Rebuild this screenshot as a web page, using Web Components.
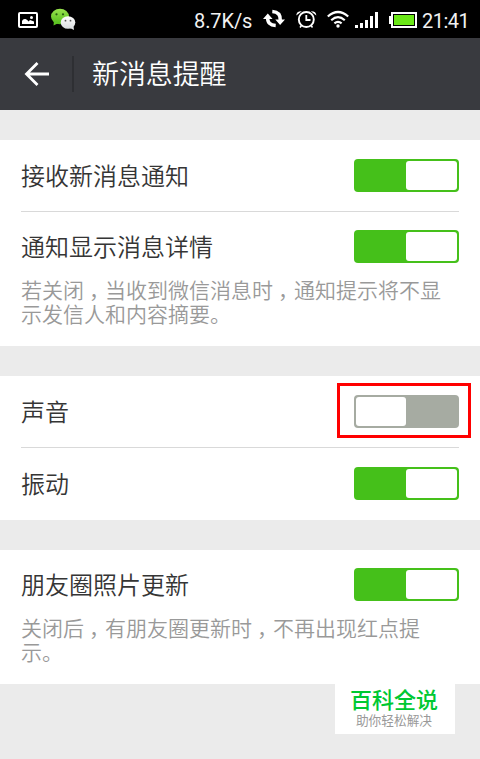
<!DOCTYPE html>
<html lang="zh-CN">
<head>
<meta charset="utf-8">
<title>新消息提醒</title>
<style>
  body {
    margin: 0;
    font-family: "Noto Sans CJK SC", sans-serif;
  }
</style>
</head>
<body>
<settings-page></settings-page>

<script>
const statusStyles = `
  <style>
    :host {
      display: flex;
      align-items: center;
      justify-content: space-between;
      height: 38px;
      box-sizing: border-box;
      background: #000;
      color: #f2f2f2;
      font: 20px/38px Roboto, sans-serif;
    }
    svg { display: block; flex: none; }
    .text { white-space: nowrap; padding-top: 2px; height: 36px; }
    .left, .right { display: flex; align-items: center; height: 38px; }
    .left { padding-left: 18px; gap: 12px; }
    .right { padding-right: 10px; }
    .speed { width: 58px; margin-right: 11px; letter-spacing: -0.1px; }
    .clock { width: 48px; letter-spacing: -0.5px; }
  </style>
`;

class StatusBar extends HTMLElement {
  constructor() {
    super();
    this.root = this.attachShadow({ mode: 'open' });
    this.renderHTML();
  }

  renderHTML() {
    this.root.innerHTML = `
      ${statusStyles}
      <div class="left">
        <svg width="20" height="38" viewBox="0 0 20 38">
          <rect x="1" y="13" width="18" height="14" rx="1" fill="none" stroke="#fff" stroke-width="2"/>
          <path d="M4 24v-3q1-2.500 3.500-2 2 .5 3 2.500l1.500-1.500 4 1.500v2.500z" fill="#fff"/>
          <circle cx="13.500" cy="17.500" r="1.500" fill="#fff"/>
        </svg>
        <svg width="26" height="38" viewBox="50 0 26 38">
          <defs>
            <linearGradient id="g" x2="0" y2="1"><stop stop-color="#98e34d"/><stop offset="1" stop-color="#55bd1d"/></linearGradient>
            <linearGradient id="w" x2="0" y2="1"><stop stop-color="#fff"/><stop offset="1" stop-color="#d9dde0"/></linearGradient>
          </defs>
          <ellipse cx="60" cy="16.500" rx="9" ry="7.800" fill="url(#g)"/>
          <path d="M54 21l-.5 4.500 5-2.500z" fill="#5fc424"/>
          <circle cx="56.500" cy="14.300" r="1.100" fill="#285c12"/>
          <circle cx="63" cy="14.300" r="1.100" fill="#285c12"/>
          <ellipse cx="68" cy="22.500" rx="7.300" ry="6.300" fill="url(#w)"/>
          <path d="M70 28l4 2-.5-4z" fill="#dfe2e4"/>
          <circle cx="65.500" cy="20.700" r=".9" fill="#555"/>
          <circle cx="70.500" cy="20.700" r=".9" fill="#555"/>
        </svg>
      </div>
      <div class="right">
        <span class="text speed">8.7K/s</span>
        <svg width="22" height="38" viewBox="263 0 22 38">
          <path d="M267.700 17.500q-.5 7.500 8 8M280.300 20.500q.5-8.500-8-9" fill="none" stroke="#fff" stroke-width="3.400"/>
          <path d="M263 19l4.800-5.500 4.800 5.500zM275.300 19.500l4.800 5.500 4.900-5.500z" fill="#fff"/>
        </svg>
        <svg width="21" height="38" viewBox="296 0 21 38" style="margin-left: 11px">
          <circle cx="306.300" cy="19.500" r="7.500" fill="none" stroke="#fff" stroke-width="1.900"/>
          <path d="M306.300 15v5h4.200" fill="none" stroke="#fff" stroke-width="1.800"/>
          <path d="M296.300 15.500q0-4.500 5.500-4.300zM316.300 15.500q0-4.500-5.500-4.300z" fill="#fff"/>
          <path d="M301.500 25.500l-1.500 2M311 25.500l1.500 2" stroke="#fff" stroke-width="1.500"/>
        </svg>
        <svg width="22" height="38" viewBox="327 0 22 38" style="margin-left: 10px">
          <g fill="none" stroke="#fff" stroke-width="2.200">
            <path d="M327.800 16.500q10.200-9 20.400 0M331.200 20.200q6.800-6 13.600 0M334.400 23.400q3.600-3 7.200 0"/>
          </g>
          <circle cx="338" cy="26" r="1.700" fill="#fff"/>
        </svg>
        <svg width="24" height="38" viewBox="355 0 24 38" style="margin-left: 6px">
          <path d="M356.500 28v-3M361.500 28v-5M366.500 28v-8M371.500 28V16M376.500 28V12" stroke="#fff" stroke-width="3"/>
        </svg>
        <svg width="28" height="38" viewBox="389 0 28 38" style="margin: 0 5px 0 10px">
          <rect x="392" y="13" width="24" height="14" fill="#000" stroke="#fff" stroke-width="2"/>
          <rect x="389" y="16" width="3" height="8" fill="#fff"/>
          <rect x="394" y="15" width="20" height="10" fill="#6be817"/>
        </svg>
        <span class="text clock">21:41</span>
      </div>
    `;
  }
}

const titleStyles = `
  <style>
    :host {
      display: flex;
      align-items: center;
      height: 72px;
      background: #393a3f;
      color: #fff;
    }
    svg { display: block; margin-left: 24px; }
    .divider {
      width: 2px;
      height: 36px;
      margin: 0 18px 0 23px;
      background: #2e2f33;
    }
    .title {
      font-size: 27px;
      font-weight: 350;
      line-height: 36px;
      padding-bottom: 3px;
      letter-spacing: -0.1px;
    }
  </style>
`;

class TitleBar extends HTMLElement {
  constructor() {
    super();
    this.root = this.attachShadow({ mode: 'open' });
    this.root.innerHTML = `
      ${titleStyles}
      <svg width="25" height="26" viewBox="24 61 25 26">
        <path d="M49 74H26.500M37.500 63L26.500 74l11 11" fill="none" stroke="#fff" stroke-width="2.800"/>
      </svg>
      <div class="divider"></div>
      <div class="title"><slot></slot></div>
    `;
  }
}

const switchStyles = `
  <style>
    :host {
      display: flex;
      justify-content: flex-end;
      box-sizing: border-box;
      width: 105px;
      height: 33px;
      padding: 2px;
      border-radius: 4px;
      background: #45c01a;
    }
    :host([off]) {
      justify-content: flex-start;
      background: #a6aba2;
    }
    .thumb {
      width: 51px;
      border-radius: 3px;
      background: #fff;
    }
    :host([off]) .thumb { width: 50px; }
  </style>
`;

class ToggleSwitch extends HTMLElement {
  constructor() {
    super();
    this.root = this.attachShadow({ mode: 'open' });
    this.root.innerHTML = `${switchStyles}<div class="thumb"></div>`;
  }
}

const rowStyles = `
  <style>
    :host {
      display: block;
      margin: 0 21px;
    }
    :host([line]) { border-bottom: 1px solid #d9d9d9; }
    .row {
      position: relative;
      display: flex;
      align-items: center;
      justify-content: space-between;
      height: var(--row-height, 71px);
    }
    .label {
      color: #353535;
      font-size: 24px;
      font-weight: 350;
      line-height: 36px;
      padding-bottom: 1px;
    }
    .mark { display: none; }
    :host([marked]) .mark {
      display: block;
      position: absolute;
      top: 7px;
      right: -12px;
      width: 128px;
      height: 49px;
      border: 3px solid #f00;
    }
    .note {
      display: block;
      color: #999;
      font-size: 21px;
      font-weight: 350;
      line-height: 24px;
    }
    ::slotted(p) { margin: -4px 0 0; }
  </style>
`;

class SettingRow extends HTMLElement {
  constructor() {
    super();
    this.root = this.attachShadow({ mode: 'open' });
    this.renderHTML();
  }

  renderHTML() {
    const off = this.hasAttribute('off') ? 'off' : '';
    this.root.innerHTML = `
      ${rowStyles}
      <div class="row">
        <span class="label">${this.getAttribute('label')}</span>
        <toggle-switch ${off}></toggle-switch>
        <div class="mark"></div>
      </div>
      <div class="note"><slot></slot></div>
    `;
  }
}

class SettingGroup extends HTMLElement {
  constructor() {
    super();
    this.root = this.attachShadow({ mode: 'open' });
    this.root.innerHTML = `
      <style>
        :host {
          display: block;
          box-sizing: border-box;
          background: #fff;
        }
      </style>
      <slot></slot>
    `;
  }
}

const badgeStyles = `
  <style>
    :host {
      display: block;
      box-sizing: border-box;
      width: 120px;
      height: 50px;
      padding-right: 2px;
      background: #fff;
      text-align: center;
    }
    .name {
      color: #00c832;
      font-size: 22px;
      font-weight: 500;
      line-height: 29px;
    }
    .slogan {
      color: #999;
      font-size: 12.700px;
      line-height: 14px;
    }
  </style>
`;

class SiteBadge extends HTMLElement {
  constructor() {
    super();
    this.root = this.attachShadow({ mode: 'open' });
    this.root.innerHTML = `
      ${badgeStyles}
      <div class="name">百科全说</div>
      <div class="slogan">助你轻松解决</div>
    `;
  }
}

const pageStyles = `
  <style>
    :host {
      display: block;
      position: relative;
      width: 480px;
      height: 759px;
      overflow: hidden;
      background: #ebebeb;
    }
    main {
      display: flex;
      flex-direction: column;
      gap: 30px;
      padding-top: 30px;
    }
    .notify { height: 206px; }
    .alert { height: 144px; }
    .moments { height: 134px; }
    .detail, .photos { --row-height: 69px; }
    /* centres the comma in its cell */
    .c { padding-left: 5px; letter-spacing: -5px; }
    site-badge {
      position: absolute;
      left: 335px;
      top: 684px;
    }
  </style>
`;

class SettingsPage extends HTMLElement {
  constructor() {
    super();
    this.root = this.attachShadow({ mode: 'open' });
    this.renderHTML();
  }

  renderHTML() {
    this.root.innerHTML = `
      ${pageStyles}
      <status-bar></status-bar>
      <title-bar>新消息提醒</title-bar>
      <main>
        <setting-group class="notify">
          <setting-row label="接收新消息通知" line></setting-row>
          <setting-row class="detail" label="通知显示消息详情">
            <p>若关闭<span class="c">，</span>当收到微信消息时<span class="c">，</span>通知提示将不显示发信人和内容摘要。</p>
          </setting-row>
        </setting-group>
        <setting-group class="alert">
          <setting-row label="声音" off marked line></setting-row>
          <setting-row label="振动"></setting-row>
        </setting-group>
        <setting-group class="moments">
          <setting-row class="photos" label="朋友圈照片更新">
            <p>关闭后<span class="c">，</span>有朋友圈更新时<span class="c">，</span>不再出现红点提示。</p>
          </setting-row>
        </setting-group>
      </main>
      <site-badge></site-badge>
    `;
  }
}

customElements.define('status-bar', StatusBar);
customElements.define('title-bar', TitleBar);
customElements.define('toggle-switch', ToggleSwitch);
customElements.define('setting-row', SettingRow);
customElements.define('setting-group', SettingGroup);
customElements.define('site-badge', SiteBadge);
customElements.define('settings-page', SettingsPage);
</script>
</body>
</html>
